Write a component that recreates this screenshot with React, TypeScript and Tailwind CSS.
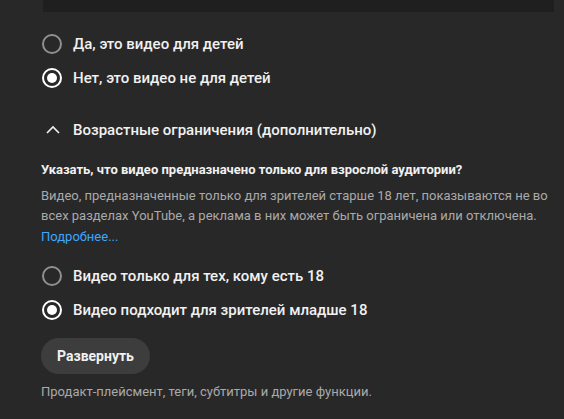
import React from "react";

function Radio({ checked, label }: { checked: boolean; label: string }) {
  return (
    <div className="flex items-center h-[34px]">
      <div className="w-[32px] flex items-center justify-start pl-[1px]">
        {checked ? (
          <div className="w-[20px] h-[20px] rounded-full border-2 border-white flex items-center justify-center">
            <div className="w-[10px] h-[10px] rounded-full bg-white" />
          </div>
        ) : (
          <div className="w-[20px] h-[20px] rounded-full border-2 border-[#909090]" />
        )}
      </div>
      <span className="text-[15px] text-[#f1f1f1] font-medium">{label}</span>
    </div>
  );
}

export default function App() {
  return (
    <div
      className="w-[564px] h-[419px] bg-[#282828] overflow-hidden"
      style={{ fontFamily: "Roboto, 'Noto Sans', sans-serif" }}
    >
      <div className="pl-[41px] pr-[8px]">
        <div className="h-[12px] bg-[#1f1f1f] ml-[2px] mr-[2px]" />
        <div className="pt-[15px]">
          <Radio checked={false} label="Да, это видео для детей" />
          <Radio checked={true} label="Нет, это видео не для детей" />
        </div>
        <div className="flex items-center mt-[23px] h-[24px]">
          <svg width="14" height="14" viewBox="0 0 14 14" className="ml-[5px] mr-[13px]">
            <path d="M1 10 L7 4 L13 10" fill="none" stroke="#f1f1f1" strokeWidth="1.6" />
          </svg>
          <span className="text-[15px] font-medium text-[#f1f1f1]">Возрастные ограничения (дополнительно)</span>
        </div>
        <div className="mt-[18px] text-[13px] font-bold text-[#f1f1f1] leading-[20px]">
          Указать, что видео предназначено только для взрослой аудитории?
        </div>
        <div className="mt-[6px] text-[13px] text-[#aaaaaa] leading-[20px]">
          Видео, предназначенные только для зрителей старше 18 лет, показываются не во всех разделах YouTube, а реклама в них может быть ограничена или отключена.
        </div>
        <div className="mt-[1px] text-[13px] text-[#3ea6ff] leading-[20px]">Подробнее...</div>
        <div className="mt-[12px]">
          <Radio checked={false} label="Видео только для тех, кому есть 18" />
          <Radio checked={true} label="Видео подходит для зрителей младше 18" />
        </div>
        <button className="mt-[11px] h-[36px] px-[16px] rounded-full bg-[#3d3d3d] text-[14px] font-bold text-[#f1f1f1]">
          Развернуть
        </button>
        <div className="mt-[8px] text-[13px] text-[#aaaaaa] leading-[20px]">
          Продакт-плейсмент, теги, субтитры и другие функции.
        </div>
      </div>
    </div>
  );
}
